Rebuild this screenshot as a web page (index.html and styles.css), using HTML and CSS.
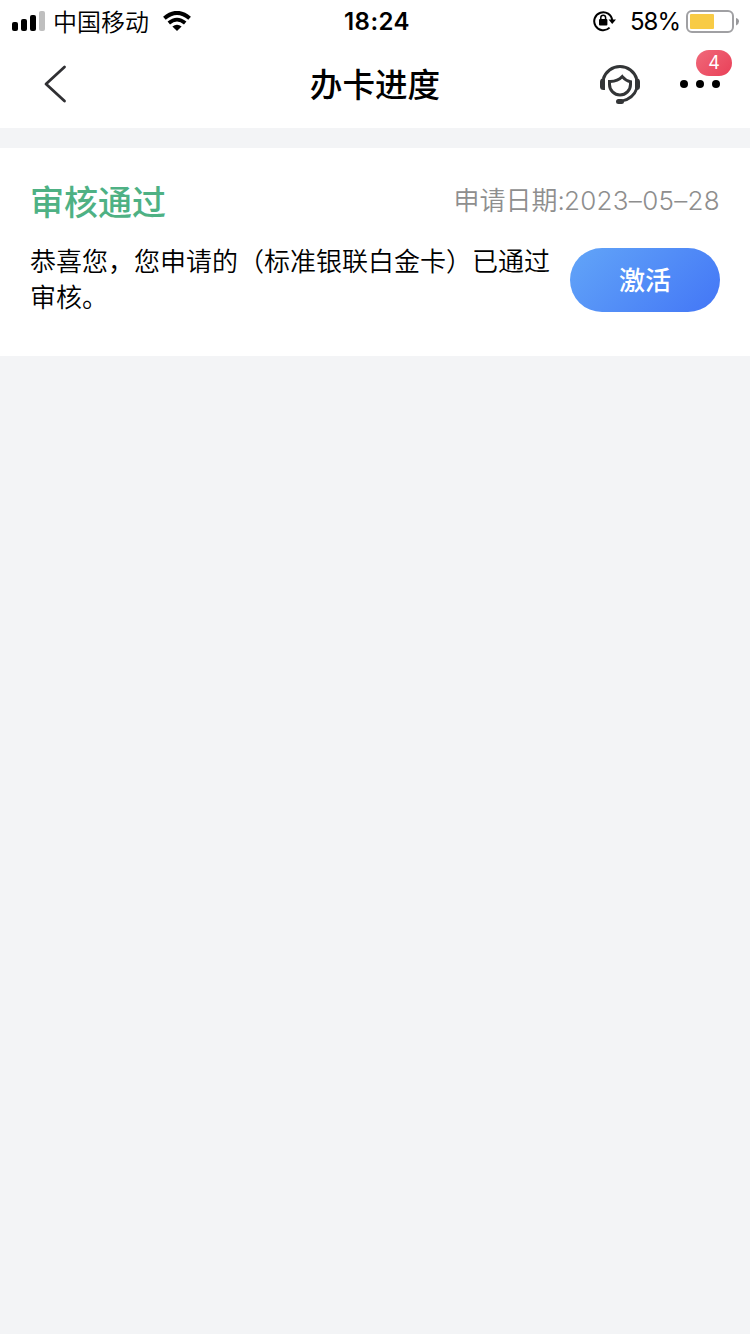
FILE: index.html
```html
<!DOCTYPE html>
<html lang="zh-CN">
<head>
<meta charset="utf-8">
<title>办卡进度</title>
<link rel="stylesheet" href="styles.css">
</head>
<body>
<header class="top">
  <div class="status">
    <div class="status-left">
      <svg class="signal" width="34" height="20" viewBox="0 0 34 20">
        <rect x="0" y="11" width="6" height="9" rx="2"/>
        <rect x="9" y="8" width="6" height="12" rx="2"/>
        <rect x="18" y="4" width="6" height="16" rx="2"/>
        <rect x="27" y="0" width="6" height="20" rx="2" fill="#bfbfbf"/>
      </svg>
      <span class="carrier">中国移动</span>
      <svg class="wifi" width="28" height="20" viewBox="0 0 28 20">
        <path d="M1.400 7.300Q14-3.500 26.600 7.300" fill="none" stroke="#000" stroke-width="4"/>
        <path d="M5.800 12Q14 5.200 22.200 12" fill="none" stroke="#000" stroke-width="3.800"/>
        <path d="M9.400 15.500Q14 12 18.600 15.500L14 20Z"/>
      </svg>
    </div>
    <time class="clock">18:24</time>
    <div class="status-right">
      <svg class="rotation" width="24" height="22" viewBox="0 0 24 22">
        <path d="M16.600 17.600A9 9 0 1 1 19.200 10.400" fill="none" stroke="#000" stroke-width="2"/>
        <path d="M15.500 9.600H23L19.200 14Z"/>
        <rect x="6" y="9" width="8.400" height="6.600" rx="1"/>
        <path d="M7.800 9.500V7.600a2.400 2.400 0 0 1 4.800 0V9.500" fill="none" stroke="#000" stroke-width="1.500"/>
      </svg>
      <span class="percent">58%</span>
      <svg class="battery" width="54" height="24" viewBox="0 0 54 24">
        <rect x="1" y="1" width="46" height="21" rx="5" fill="#fff" stroke="#a0a0a3" stroke-width="2"/>
        <rect x="4" y="4" width="24" height="15" rx="1" fill="#f8cb45"/>
        <path d="M50 8Q53 8.800 53 11.500T50 15.500Z" fill="#98989b"/>
      </svg>
    </div>
  </div>
  <nav class="nav">
    <svg class="back" width="26" height="40" viewBox="0 0 26 40">
      <path d="M22.500 3L4 20L22.500 37" fill="none" stroke="#303033" stroke-width="2.800" stroke-linecap="round" stroke-linejoin="round"/>
    </svg>
    <h1 class="title">办卡进度</h1>
    <div class="actions">
      <svg class="service" width="40" height="40" viewBox="0 0 40 40" fill="none" stroke="#333537">
        <path d="M3.300 15A17.400 17.400 0 0 1 36.700 15" stroke-width="3"/>
        <path d="M37 24Q33.500 34.500 22 37" stroke-width="2.800"/>
        <path d="M5 14.200V26H3.500Q0 26 0 22.500V18Q0 14.200 3.500 14.200Z" fill="#333537" stroke="none"/>
        <path d="M35 14.200V26H36.500Q40 26 40 22.500V18Q40 14.200 36.500 14.200Z" fill="#333537" stroke="none"/>
        <path d="M9.500 17.500Q17.500 17.800 22.300 12.600Q26 17 30.500 17.700V20.500A10.500 10.500 0 0 1 9.500 20.500Z" stroke-width="3"/>
        <rect x="16" y="35" width="8" height="5" rx="2.500" fill="#333537" stroke="none"/>
      </svg>
      <div class="more">
        <svg width="40" height="8" viewBox="0 0 40 8"><circle cx="4" cy="4" r="4"/><circle cx="20" cy="4" r="4"/><circle cx="36" cy="4" r="4"/></svg>
        <span class="badge">4</span>
      </div>
    </div>
  </nav>
</header>
<main class="card">
  <div class="card-head">
    <h2 class="result">审核通过</h2>
    <p class="date">申请日期:<span class="date-value">2023–05–28</span></p>
  </div>
  <div class="card-body">
    <p class="message">恭喜您，您申请的（标准银联白金卡）已通过审核。</p>
    <button class="activate" type="button">激活</button>
  </div>
</main>
</body>
</html>
```
FILE: styles.css
```css
* {
  box-sizing: border-box;
}

body {
  margin: 0;
  min-height: 1334px;
  background: #f3f4f6;
  color: #000;
  font-family: Inter, "Noto Sans CJK SC", sans-serif;
}

h1, h2, p {
  margin: 0;
}

svg {
  display: block;
  flex: none;
}

.top {
  height: 128px;
  background: #fff;
}

.status {
  display: grid;
  grid-template-columns: 1fr auto 1fr;
  height: 40px;
  padding: 0 10px 0 12px;
  align-items: center;
}

.status-left,
.status-right {
  display: flex;
  align-items: center;
}

.status-right {
  justify-content: flex-end;
}

.carrier {
  margin: 0 14px 0 7px;
  padding-top: 2px;
  font-size: 24px;
  font-weight: 350;
  line-height: 40px;
}

.wifi {
  margin-bottom: 2px;
}

.signal {
  margin-bottom: 2px;
}

.clock {
  margin-left: 2px;
  padding-top: 1px;
  font-size: 24px;
  font-weight: 600;
  line-height: 42px;
  letter-spacing: 0.5px;
}

.rotation {
  margin-bottom: 2px;
}

.percent {
  margin: 0 6px 0 13px;
  padding-top: 1px;
  font-size: 24px;
  line-height: 42px;
  letter-spacing: -1px;
}

.nav {
  display: grid;
  grid-template-columns: 1fr auto 1fr;
  height: 88px;
  padding: 0 30px 0 42px;
  align-items: center;
}

.title {
  margin-left: -12px;
  padding-top: 2px;
  font-size: 32.600px;
  font-weight: 500;
  line-height: 86px;
}

.actions {
  display: flex;
  justify-content: flex-end;
  align-items: center;
  gap: 40px;
}

.more {
  position: relative;
}

.badge {
  position: absolute;
  right: -12px;
  bottom: 8px;
  width: 36px;
  height: 26px;
  margin-bottom: 4px;
  border-radius: 13px;
  background: linear-gradient(135deg, #f0697a, #e94058);
  color: #fff;
  font-size: 18px;
  line-height: 26px;
  text-align: center;
}

.card {
  height: 208px;
  margin-top: 20px;
  padding: 30px;
  background: #fff;
}

.card-head {
  display: flex;
  justify-content: space-between;
  height: 66px;
}

.result {
  color: #4eb184;
  font-size: 34px;
  font-weight: 500;
  line-height: 49px;
}

.date {
  color: #8e8e8e;
  font-size: 26px;
  font-weight: 350;
  line-height: 45px;
  white-space: nowrap;
}

.date-value {
  margin-left: -1px;
  letter-spacing: 0.3px;
}

.card-body {
  display: flex;
  justify-content: space-between;
}

.message {
  width: 520px;
  font-size: 26px;
  font-weight: 350;
  line-height: 36px;
}

.activate {
  width: 150px;
  height: 64px;
  margin-top: 4px;
  padding: 0 0 3px;
  border: 0;
  border-radius: 32px;
  background: linear-gradient(135deg, #62a5f8, #4376f6);
  color: #fff;
  font: 500 26px/61px "Noto Sans CJK SC", sans-serif;
}
```
